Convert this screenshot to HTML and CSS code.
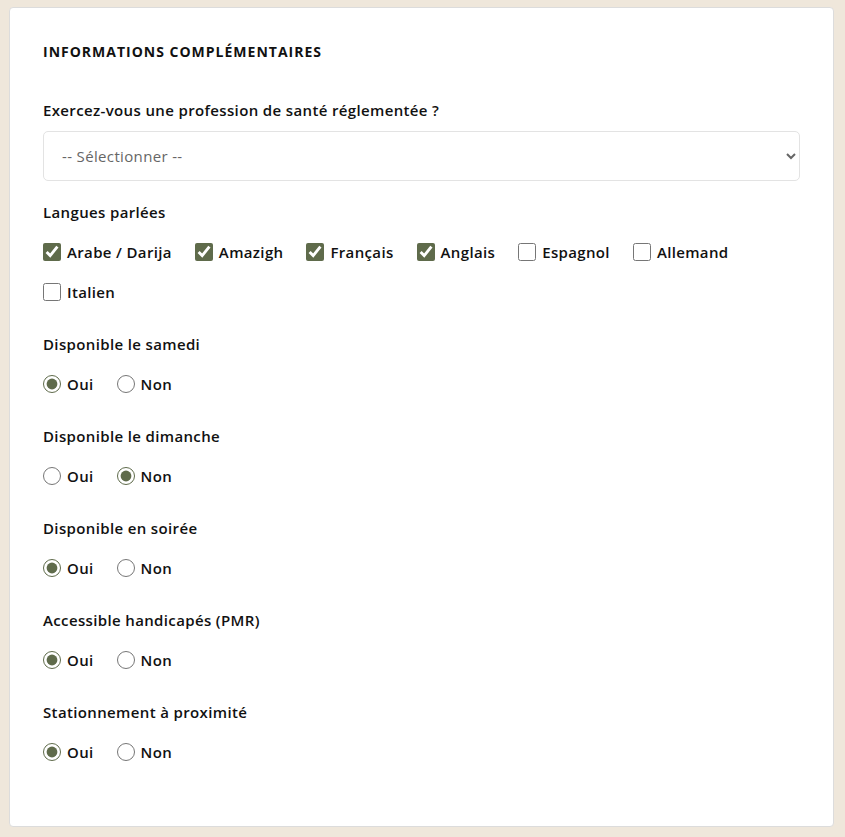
FILE: index.html
```html
<!DOCTYPE html>
<html lang="fr">
<head>
<meta charset="utf-8">
<title>Informations complémentaires</title>
<link rel="stylesheet" href="styles.css">
</head>
<body>
<div class="card">
  <h2 class="title">INFORMATIONS COMPLÉMENTAIRES</h2>

  <div class="field">
    <label class="label" for="prof">Exercez-vous une profession de santé réglementée ?</label>
    <select id="prof" class="select">
      <option>-- Sélectionner --</option>
      <option>Oui</option>
      <option>Non</option>
    </select>
  </div>

  <div class="field">
    <div class="label">Langues parlées</div>
    <div class="options wrap">
      <label class="opt"><input type="checkbox" checked><span>Arabe / Darija</span></label>
      <label class="opt"><input type="checkbox" checked><span>Amazigh</span></label>
      <label class="opt"><input type="checkbox" checked><span>Français</span></label>
      <label class="opt"><input type="checkbox" checked><span>Anglais</span></label>
      <label class="opt"><input type="checkbox"><span>Espagnol</span></label>
      <label class="opt"><input type="checkbox"><span>Allemand</span></label>
      <label class="opt"><input type="checkbox"><span>Italien</span></label>
    </div>
  </div>

  <div class="field">
    <div class="label">Disponible le samedi</div>
    <div class="options">
      <label class="opt"><input type="radio" name="sam" checked><span>Oui</span></label>
      <label class="opt"><input type="radio" name="sam"><span>Non</span></label>
    </div>
  </div>

  <div class="field">
    <div class="label">Disponible le dimanche</div>
    <div class="options">
      <label class="opt"><input type="radio" name="dim"><span>Oui</span></label>
      <label class="opt"><input type="radio" name="dim" checked><span>Non</span></label>
    </div>
  </div>

  <div class="field">
    <div class="label">Disponible en soirée</div>
    <div class="options">
      <label class="opt"><input type="radio" name="soir" checked><span>Oui</span></label>
      <label class="opt"><input type="radio" name="soir"><span>Non</span></label>
    </div>
  </div>

  <div class="field">
    <div class="label">Accessible handicapés (PMR)</div>
    <div class="options">
      <label class="opt"><input type="radio" name="pmr" checked><span>Oui</span></label>
      <label class="opt"><input type="radio" name="pmr"><span>Non</span></label>
    </div>
  </div>

  <div class="field">
    <div class="label">Stationnement à proximité</div>
    <div class="options">
      <label class="opt"><input type="radio" name="park" checked><span>Oui</span></label>
      <label class="opt"><input type="radio" name="park"><span>Non</span></label>
    </div>
  </div>
</div>
</body>
</html>
```

FILE: styles.css
```css
html, body {
  margin: 0;
  padding: 0;
}
body {
  background: #efe7db;
  font-family: "Open Sans", "Noto Sans", sans-serif;
  color: #111;
  padding: 7px 11px 11px 9px;
}
.card {
  background: #fff;
  border: 1px solid #dcdcdc;
  border-radius: 4px;
  padding: 34px 33px 62px 33px;
}
.title {
  margin: 0 0 38px 0;
  font-size: 14px;
  line-height: 20px;
  font-weight: 700;
  letter-spacing: 1px;
  color: #111;
}
.field {
  margin-top: 30px;
}
.label {
  display: block;
  font-size: 15px;
  line-height: 20px;
  font-weight: 600;
  letter-spacing: 0.36px;
  color: #111;
  margin-bottom: 18px;
}
.field:first-of-type .label {
  margin-bottom: 11px;
}
.select {
  display: block;
  width: 100%;
  height: 50px;
  border: 1px solid #e3e3e3;
  border-radius: 5px;
  background: #fff;
  padding: 0 14px;
  font-family: inherit;
  font-size: 15px;
  letter-spacing: 0.35px;
  color: #666;
  margin-bottom: -9px;
}
.options {
  display: flex;
  column-gap: 23px;
  row-gap: 16px;
}
.options.wrap {
  flex-wrap: wrap;
}
.opt {
  display: flex;
  align-items: center;
  gap: 6px;
  height: 24px;
  font-size: 15px;
  font-weight: 600;
  letter-spacing: 0.35px;
  color: #111;
}
.opt input {
  width: 18px;
  height: 18px;
  margin: 0;
  accent-color: #5f6b4b;
}
```
